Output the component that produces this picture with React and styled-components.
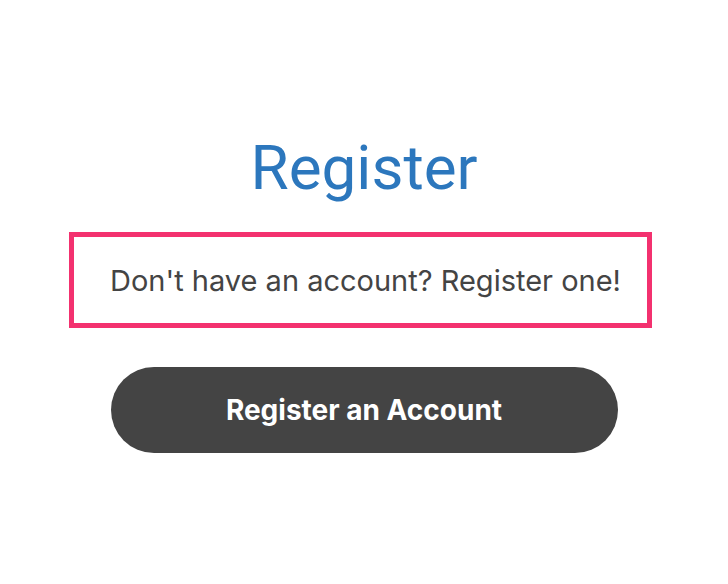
import styled, { createGlobalStyle } from 'styled-components';

const GlobalStyle = createGlobalStyle`
  html, body {
    margin: 0;
    padding: 0;
    background: #ffffff;
  }
  body {
    font-family: Inter, Roboto, "Liberation Sans", sans-serif;
  }
`;

const Page = styled.div`
  width: 728px;
  height: 584px;
  display: flex;
  flex-direction: column;
  align-items: center;
  padding-top: 128px;
  box-sizing: border-box;
`;

const Title = styled.h1`
  margin: 0;
  font-family: Roboto, "Liberation Sans", sans-serif;
  font-size: 62px;
  font-weight: 400;
  line-height: 80px;
  color: #2c77bd;
`;

const Notice = styled.div`
  width: 583px;
  height: 96px;
  box-sizing: border-box;
  margin-top: 24px;
  margin-left: -7px;
  border: 5px solid #f3316f;
  display: flex;
  align-items: center;
  padding-left: 36px;
  font-size: 29px;
  color: #444444;
`;

const Button = styled.button`
  width: 507px;
  height: 86px;
  margin-top: 39px;
  border: none;
  border-radius: 43px;
  background: #444444;
  color: #ffffff;
  font-family: Inter, Roboto, "Liberation Sans", sans-serif;
  font-size: 28px;
  font-weight: 700;
  cursor: pointer;
`;

export default function App() {
  return (
    <>
      <GlobalStyle />
      <Page>
        <Title>Register</Title>
        <Notice>Don't have an account? Register one!</Notice>
        <Button>Register an Account</Button>
      </Page>
    </>
  );
}
